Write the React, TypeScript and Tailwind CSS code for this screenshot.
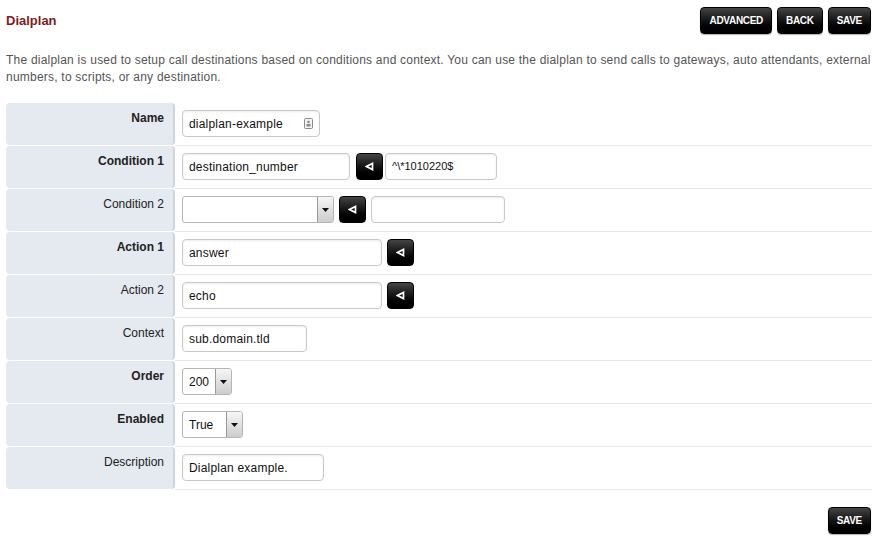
import React from 'react';

const font = { fontFamily: '"Liberation Sans", Arial, sans-serif' };

const BlackButton: React.FC<{ label: string }> = ({ label }) => (
  <button className="h-[27px] px-[8px] rounded-[4px] border border-black bg-linear-to-b from-[#454545] to-[#000000] text-white font-bold text-[10px] tracking-[-0.3px] shadow-[0_1px_1px_rgba(0,0,0,0.3)]">
    {label}
  </button>
);

const ArrowButton: React.FC = () => (
  <button className="h-[27px] w-[27px] flex items-center justify-center rounded-[4px] border border-black bg-linear-to-b from-[#454545] to-[#000000]">
    <svg width="9" height="9" viewBox="0 0 9 9">
      <polygon points="7.5,1.5 7.5,7.5 1.5,4.5" fill="none" stroke="#fff" strokeWidth="1.7" strokeLinejoin="miter" />
    </svg>
  </button>
);

const TextBox: React.FC<{ value?: string; width: string; icon?: boolean; small?: boolean }> = ({ value = '', width, icon, small }) => (
  <div
    className={`${width} h-[27px] flex items-center justify-between px-[6px] rounded-[4px] border border-[#c9c9c9] bg-white shadow-[inset_0_1px_2px_rgba(0,0,0,0.08)] ${small ? 'text-[11px]' : 'text-[12px] tracking-[0.2px]'} text-[#111]`}
  >
    <span>{value}</span>
    {icon && (
      <svg width="9" height="11" viewBox="0 0 9 11">
        <rect x="0.5" y="0.5" width="8" height="10" rx="1" fill="#f2f2f2" stroke="#8a8a8a" />
        <circle cx="4.5" cy="4" r="1.3" fill="#8a8a8a" />
        <rect x="2.5" y="6" width="4" height="2.5" fill="#8a8a8a" />
      </svg>
    )}
  </div>
);

const Select: React.FC<{ value?: string; width: string }> = ({ value = '', width }) => (
  <div className={`${width} h-[27px] flex items-stretch rounded-[3px] border border-[#b5b5b5] bg-white overflow-hidden text-[12px] text-[#111]`}>
    <span className="flex-1 flex items-center px-[6px]">{value}</span>
    <span className="w-[16px] flex items-center justify-center border-l border-[#9a9a9a] bg-linear-to-b from-[#f6f6f6] to-[#cdcdcd]">
      <svg width="7" height="4" viewBox="0 0 7 4">
        <polygon points="0,0 7,0 3.5,4" fill="#111" />
      </svg>
    </span>
  </div>
);

const Row: React.FC<{ label: string; bold?: boolean; children: React.ReactNode }> = ({ label, bold, children }) => (
  <div className="flex h-[43px]">
    <div
      className={`w-[169px] h-[42px] shrink-0 rounded-[4px] bg-[#e5e9f0] border-r-[2px] border-[#cfd3da] text-right pr-[9px] pt-[8px] text-[12px] leading-[14px] text-[#222] ${bold ? 'font-bold' : ''}`}
    >
      {label}
    </div>
    <div className="flex-1 border-b border-[#e6e6e6] pl-[7px] pt-[7px] flex items-start">{children}</div>
  </div>
);

export default function App() {
  return (
    <div className="w-[876px] h-[540px] bg-white px-[6px]" style={font}>
      <div className="flex items-center justify-between pt-[7px] w-[865px]">
        <h1 className="text-[13px] font-bold text-[#801c1c]">Dialplan</h1>
        <div className="flex gap-[5px]">
          <BlackButton label="ADVANCED" />
          <BlackButton label="BACK" />
          <BlackButton label="SAVE" />
        </div>
      </div>

      <p className="mt-[18px] text-[12px] leading-[17px] tracking-[0.22px] text-[#555] w-[869px]">
        The dialplan is used to setup call destinations based on conditions and context. You can use the dialplan to send calls to gateways, auto attendants, external numbers, to scripts, or any destination.
      </p>

      <div className="mt-[17px] w-[866px] flex flex-col">
        <Row label="Name" bold>
          <TextBox value="dialplan-example" width="w-[138px]" icon />
        </Row>
        <Row label="Condition 1" bold>
          <div className="flex items-center gap-[6px]">
            <TextBox value="destination_number" width="w-[168px]" />
            <div className="flex items-center gap-[2px]">
              <ArrowButton />
              <TextBox value="^\*1010220$" width="w-[112px]" small />
            </div>
          </div>
        </Row>
        <Row label="Condition 2">
          <div className="flex items-center gap-[5px]">
            <Select width="w-[152px]" />
            <ArrowButton />
            <TextBox width="w-[134px]" />
          </div>
        </Row>
        <Row label="Action 1" bold>
          <div className="flex items-center gap-[5px]">
            <TextBox value="answer" width="w-[200px]" />
            <ArrowButton />
          </div>
        </Row>
        <Row label="Action 2">
          <div className="flex items-center gap-[5px]">
            <TextBox value="echo" width="w-[200px]" />
            <ArrowButton />
          </div>
        </Row>
        <Row label="Context">
          <TextBox value="sub.domain.tld" width="w-[125px]" />
        </Row>
        <Row label="Order" bold>
          <Select value="200" width="w-[50px]" />
        </Row>
        <Row label="Enabled" bold>
          <Select value="True" width="w-[61px]" />
        </Row>
        <Row label="Description">
          <TextBox value="Dialplan example." width="w-[142px]" />
        </Row>
      </div>

      <div className="flex justify-end w-[865px] mt-[17px]">
        <BlackButton label="SAVE" />
      </div>
    </div>
  );
}
